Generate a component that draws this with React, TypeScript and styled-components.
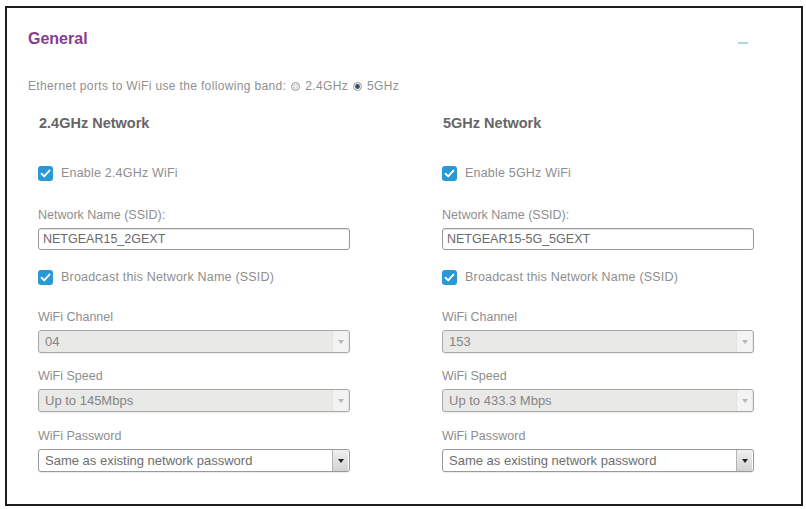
import styled, { createGlobalStyle } from 'styled-components';

const GlobalStyle = createGlobalStyle`
  html, body {
    margin: 0;
    background: #ffffff;
  }
  body {
    font-family: "Liberation Sans", Arial, Helvetica, sans-serif;
    color: #7a7a7a;
  }
`;

const Panel = styled.section`
  box-sizing: border-box;
  height: 500px;
  margin: 6px 3px 0 5px;
  border: 2px solid #1e1e1e;
  padding: 21px 0 0 21px;
`;

const Header = styled.div`
  display: flex;
  justify-content: space-between;
  align-items: flex-end;
  height: 19px;
  padding-right: 53px;
`;

const Title = styled.h2`
  margin: 0;
  font-size: 16px;
  line-height: 19px;
  font-weight: bold;
  color: #8b3a91;
`;

const Collapse = styled.span`
  display: block;
  width: 10px;
  height: 2px;
  margin-bottom: 4px;
  background: #a6dcd9;
`;

const BandLine = styled.div`
  display: flex;
  align-items: center;
  margin-top: 31px;
  font-size: 12px;
  line-height: 14px;
  letter-spacing: 0.35px;
  color: #909090;
`;

const BandOption = styled.span`
  display: inline-flex;
  align-items: center;
  gap: 5px;
  margin-left: 5px;
`;

const Columns = styled.div`
  display: grid;
  grid-template-columns: 312px 312px;
  column-gap: 92px;
  margin: 21px 0 0 10px;
`;

const Column = styled.div`
  display: flex;
  flex-direction: column;
`;

const NetworkTitle = styled.h3`
  margin: 0 0 0 1px;
  font-size: 14.5px;
  line-height: 18px;
  font-weight: bold;
  color: #666666;
`;

const CheckRow = styled.label<{ $top: number }>`
  display: flex;
  align-items: center;
  gap: 8px;
  height: 16px;
  margin-top: ${(p) => p.$top}px;
  font-size: 12.5px;
  letter-spacing: 0.2px;
  color: #8e8e8e;
`;

const Field = styled.div<{ $top: number }>`
  display: flex;
  flex-direction: column;
  gap: 5px;
  margin-top: ${(p) => p.$top}px;
`;

const FieldLabel = styled.span`
  font-size: 12.5px;
  line-height: 16px;
  color: #8e8e8e;
`;

const TextInput = styled.input`
  box-sizing: border-box;
  width: 312px;
  height: 22px;
  margin: 0;
  padding: 0 4px;
  border: 1px solid #9a9a9a;
  border-radius: 3px;
  box-shadow: inset 0 1px 1px rgba(0, 0, 0, 0.12);
  font-family: inherit;
  font-size: 12.5px;
  color: #6a6a6a;
  background: #ffffff;
  outline: none;
`;

const Select = styled.div<{ $disabled?: boolean }>`
  box-sizing: border-box;
  display: flex;
  align-items: center;
  width: 312px;
  height: 23px;
  border: 1px solid ${(p) => (p.$disabled ? '#a9a9a9' : '#9a9a9a')};
  border-radius: 3px;
  background: ${(p) => (p.$disabled ? '#e9e9e7' : '#ffffff')};
  box-shadow: 0 1px 1px rgba(0, 0, 0, 0.08);
  font-size: 13px;
  color: ${(p) => (p.$disabled ? '#858585' : '#6e6e6e')};
  overflow: hidden;
`;

const SelectValue = styled.span`
  flex: 1;
  padding-left: 6px;
`;

const SelectArrow = styled.span<{ $disabled?: boolean }>`
  display: flex;
  align-items: center;
  justify-content: center;
  width: 15px;
  height: 100%;
  margin-right: 1px;
  border-left: 1px solid ${(p) => (p.$disabled ? '#e2e2e2' : '#b5b5b5')};
  background: ${(p) =>
    p.$disabled ? '#f3f3f3' : 'linear-gradient(#f0f0f0, #d2d2d2)'};

  &::after {
    content: '';
    border-left: 3px solid transparent;
    border-right: 3px solid transparent;
    border-top: 4px solid ${(p) => (p.$disabled ? '#b8b8b8' : '#222222')};
  }
`;

function CheckIcon() {
  return (
    <svg width="15" height="15" viewBox="0 0 15 15">
      <rect x="0" y="0" width="15" height="15" rx="3" fill="#2a98d4" />
      <path d="M3.6 7.8 L6.2 10.4 L11.4 4.6" fill="none" stroke="#ffffff" strokeWidth="2" strokeLinecap="round" strokeLinejoin="round" />
    </svg>
  );
}

function Radio({ checked }: { checked?: boolean }) {
  return (
    <svg width="9" height="9" viewBox="0 0 9 9">
      <circle cx="4.5" cy="4.5" r="4" fill="#f4f4f4" stroke="#9c9c9c" strokeWidth="1" />
      {checked ? <circle cx="4.5" cy="4.5" r="2.4" fill="#2e4f73" /> : <circle cx="4.5" cy="4.5" r="2" fill="none" stroke="#c4c4c4" strokeWidth="0.8" />}
    </svg>
  );
}

type Network = {
  title: string;
  band: string;
  ssid: string;
  channel: string;
  speed: string;
};

const networks: Network[] = [
  { title: '2.4GHz Network', band: '2.4GHz', ssid: 'NETGEAR15_2GEXT', channel: '04', speed: 'Up to 145Mbps' },
  { title: '5GHz Network', band: '5GHz', ssid: 'NETGEAR15-5G_5GEXT', channel: '153', speed: 'Up to 433.3 Mbps' },
];

function NetworkColumn({ net }: { net: Network }) {
  return (
    <Column>
      <NetworkTitle>{net.title}</NetworkTitle>
      <CheckRow $top={33}>
        <CheckIcon />
        Enable {net.band} WiFi
      </CheckRow>
      <Field $top={26}>
        <FieldLabel>Network Name (SSID):</FieldLabel>
        <TextInput readOnly value={net.ssid} />
      </Field>
      <CheckRow $top={19}>
        <CheckIcon />
        Broadcast this Network Name (SSID)
      </CheckRow>
      <Field $top={24}>
        <FieldLabel>WiFi Channel</FieldLabel>
        <Select $disabled>
          <SelectValue>{net.channel}</SelectValue>
          <SelectArrow $disabled />
        </Select>
      </Field>
      <Field $top={15}>
        <FieldLabel>WiFi Speed</FieldLabel>
        <Select $disabled>
          <SelectValue>{net.speed}</SelectValue>
          <SelectArrow $disabled />
        </Select>
      </Field>
      <Field $top={16}>
        <FieldLabel>WiFi Password</FieldLabel>
        <Select>
          <SelectValue>Same as existing network password</SelectValue>
          <SelectArrow />
        </Select>
      </Field>
    </Column>
  );
}

export default function App() {
  return (
    <>
      <GlobalStyle />
      <Panel>
        <Header>
          <Title>General</Title>
          <Collapse />
        </Header>
        <BandLine>
          Ethernet ports to WiFi use the following band:
          <BandOption>
            <Radio />
            2.4GHz
          </BandOption>
          <BandOption>
            <Radio checked />
            5GHz
          </BandOption>
        </BandLine>
        <Columns>
          {networks.map((n) => (
            <NetworkColumn key={n.title} net={n} />
          ))}
        </Columns>
      </Panel>
    </>
  );
}
